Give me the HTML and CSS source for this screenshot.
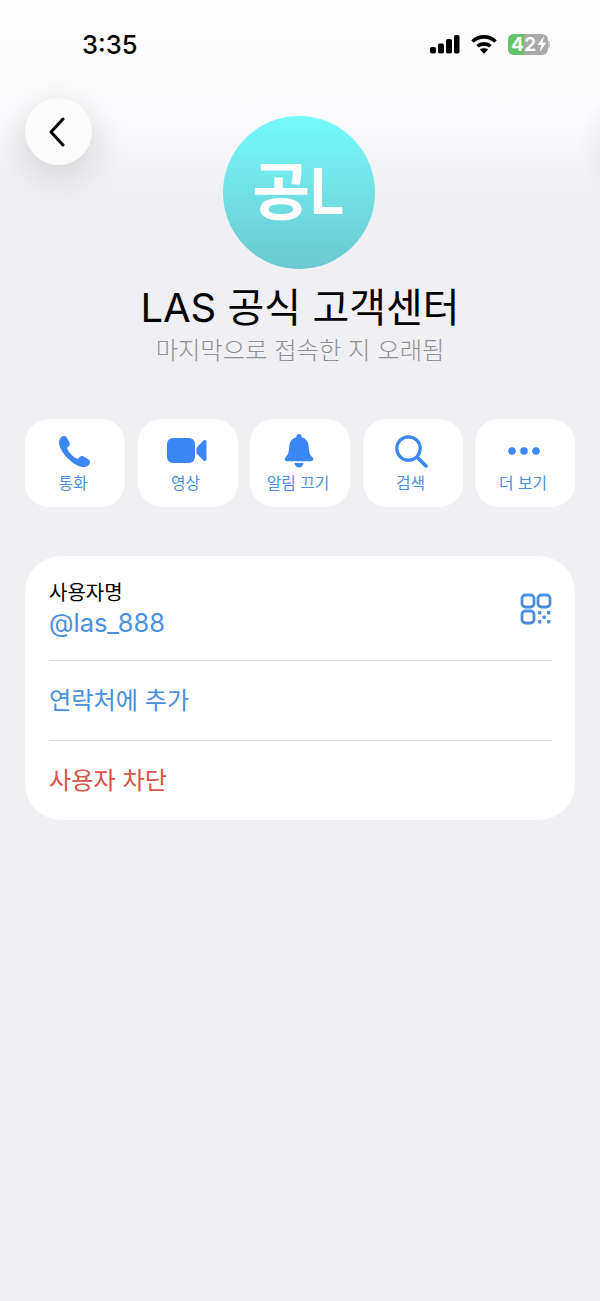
FILE: index.html
```html
<!DOCTYPE html>
<html lang="ko">
    <head>
        <meta charset="utf-8">
        <meta name="viewport" content="width=device-width, initial-scale=1">
        <title>LAS 공식 고객센터</title>
        <link rel="stylesheet" href="styles.css">
    </head>
    <body>
        <div class="status-bar">
            <span class="time">3:35</span>
            <div class="status-icons">
                <svg width="31" height="20" viewBox="0 0 31 20">
                    <rect x="1" y="13" width="6" height="6.500" rx="1.800" fill="#000"/>
                    <rect x="9" y="9.500" width="6" height="10" rx="1.800" fill="#000"/>
                    <rect x="17" y="5" width="6" height="14.500" rx="1.800" fill="#000"/>
                    <rect x="25" y="1" width="5.500" height="18.500" rx="1.800" fill="#000"/>
                </svg>
                <svg width="26" height="20" viewBox="0 0 26 20" fill="none" stroke="#000" stroke-width="3.600">
                    <path d="M1.500 7.500C7.800 1.300 18.200 1.300 24.500 7.500"/>
                    <path d="M6.500 12.300C10 9 16 9 19.500 12.300"/>
                    <path d="M13 19.800L8.800 15.600C11 13.700 15 13.700 17.200 15.600Z" fill="#000" stroke="none"/>
                </svg>
                <div class="battery">
                    <div class="battery-body">
                        <span class="battery-fill"></span>
                        <span class="battery-text">42</span>
                        <svg class="bolt" width="10" height="16" viewBox="0 0 10 16"><path d="M7 0L0.500 9H4.200L2.800 16L9.500 6.500H5.500Z" fill="#fff"/></svg>
                    </div>
                    <span class="battery-cap"></span>
                </div>
            </div>
        </div>

        <button class="back-btn">
            <svg width="16" height="30" viewBox="0 0 16 30" fill="none" stroke="#000" stroke-width="3" stroke-linecap="round" stroke-linejoin="round"><path d="M14 2L2 15L14 28"/></svg>
        </button>

        <div class="profile">
            <div class="avatar">공L</div>
            <h1 class="name">LAS 공식 고객센터</h1>
            <p class="last-seen">마지막으로 접속한 지 오래됨</p>
        </div>

        <div class="actions">
            <div class="action">
                <div class="action-icon">
                    <svg width="33" height="33" viewBox="0 0 34 34"><path d="M3.500 1.800C5 .6 7.600 .5 8.700 2.300L11.700 7.500C12.600 9 12.300 10.500 11.100 11.700L9.300 13.400C10.700 17.800 15.800 23.200 20.400 24.700L22.300 22.700C23.500 21.500 25 21.300 26.400 22.100L31.500 25.200C33.400 26.400 33.400 28.700 32.100 30.300C29.900 32.900 26.900 33.700 23.600 32.800C14.600 30.300 4.200 19.800 1.500 10.800C.5 7.200 1.200 4 3.500 1.800Z" fill="#3b87f5"/></svg>
                </div>
                <span class="action-label">통화</span>
            </div>
            <div class="action">
                <div class="action-icon">
                    <svg width="40" height="26" viewBox="0 0 40 26"><rect x="0" y="0" width="28" height="25" rx="6" fill="#3b87f5"/><path d="M29.500 10.500C29.500 9.800 29.800 9.200 30.300 8.800L36.500 2.500C37.600 1.500 39.500 2 39.500 3.800V21.200C39.500 23 37.600 23.500 36.500 22.500L30.300 16.200C29.800 15.800 29.500 15.200 29.500 14.500Z" fill="#3b87f5"/></svg>
                </div>
                <span class="action-label">영상</span>
            </div>
            <div class="action">
                <div class="action-icon">
                    <svg width="30" height="34" viewBox="0 0 30 34"><path d="M15 0C16.500 0 17.500 1 17.500 2.400V3.200C22.500 4.300 24.600 8.500 24.800 13C25 18.500 26 21 28.500 23.500C30 25 29.300 27.200 27 27.200H3C.7 27.200 0 25 1.500 23.500C4 21 5 18.500 5.200 13C5.400 8.500 7.500 4.300 12.500 3.200V2.400C12.500 1 13.500 0 15 0Z" fill="#3b87f5"/><path d="M10.500 29H19.500C19.200 31.700 17.400 33.500 15 33.500C12.600 33.500 10.800 31.700 10.500 29Z" fill="#3b87f5"/></svg>
                </div>
                <span class="action-label">알림 끄기</span>
            </div>
            <div class="action">
                <div class="action-icon">
                    <svg width="33" height="33" viewBox="0 0 33 33" fill="none" stroke="#3b87f5" stroke-width="3.200" stroke-linecap="round"><circle cx="13.500" cy="13.500" r="11.700"/><path d="M22.500 22.500L31 31" stroke-width="3.800"/></svg>
                </div>
                <span class="action-label">검색</span>
            </div>
            <div class="action">
                <div class="action-icon">
                    <svg width="34" height="10" viewBox="0 0 34 10"><circle cx="5" cy="5" r="3.800" fill="#3b87f5"/><circle cx="17" cy="5" r="3.800" fill="#3b87f5"/><circle cx="29" cy="5" r="3.800" fill="#3b87f5"/></svg>
                </div>
                <span class="action-label">더 보기</span>
            </div>
        </div>

        <div class="info-card">
            <div class="row row-user">
                <div>
                    <div class="row-label">사용자명</div>
                    <div class="row-username">@las_888</div>
                </div>
                <svg width="32" height="32" viewBox="0 0 32 32" fill="none" stroke="#4a8fe0" stroke-width="2.800">
                    <rect x="2" y="2" width="12" height="12" rx="3.500"/>
                    <rect x="18" y="2" width="12" height="12" rx="3.500"/>
                    <rect x="2" y="18" width="12" height="12" rx="3.500"/>
                    <g fill="#4a8fe0" stroke="none">
                        <rect x="18" y="18" width="3.400" height="3.400" rx=".8"/>
                        <rect x="27" y="18" width="3.400" height="3.400" rx=".8"/>
                        <rect x="22.500" y="22.500" width="3.400" height="3.400" rx=".8"/>
                        <rect x="18" y="27" width="3.400" height="3.400" rx=".8"/>
                        <rect x="27" y="27" width="3.400" height="3.400" rx=".8"/>
                    </g>
                </svg>
            </div>
            <div class="row"><span class="row-link">연락처에 추가</span></div>
            <div class="row"><span class="row-danger">사용자 차단</span></div>
        </div>
    </body>
</html>
```

FILE: styles.css
```css
*, ::after, ::before {
    box-sizing: border-box;
}
html {
    height: 100%;
}
body {
    position: relative;
    min-height: 100%;
    margin: 0;
    font-family: "Inter", "Noto Sans CJK KR", sans-serif;
    /* first layer is the shadow of a control cut off by the right screen edge */
    background:
        radial-gradient(circle at 640px 145px, rgba(0, 0, 0, 0.09), rgba(0, 0, 0, 0) 62px),
        linear-gradient(#fdfdfe 0px, #fbfbfd 115px, #f2f2f6 175px, #efeff4 205px) no-repeat #efeff4;
    overflow: hidden;
}
.status-bar {
    display: flex;
    justify-content: space-between;
    align-items: center;
    height: 90px;
    padding: 0 50px 2px 82px;
}
.time {
    font-size: 25.500px;
    font-weight: 500;
    color: #000;
}
.status-icons {
    display: flex;
    align-items: center;
    gap: 11px;
}
.battery {
    display: flex;
    align-items: center;
}
.battery-body {
    position: relative;
    display: flex;
    align-items: center;
    width: 40px;
    height: 21px;
    padding-left: 3px;
    border-radius: 6px;
    background: #a9a9ab;
    overflow: hidden;
}
.battery-fill {
    position: absolute;
    left: 0;
    top: 0;
    bottom: 0;
    width: 16px;
    background: #66c467;
}
.battery-text {
    position: relative;
    font-size: 19px;
    font-weight: 700;
    letter-spacing: 0.500px;
    color: #fff;
}
.bolt {
    position: relative;
}
.battery-cap {
    width: 2px;
    height: 7px;
    border-radius: 0 2px 2px 0;
    background: #c4c4c6;
}
.back-btn {
    position: absolute;
    left: 25px;
    top: 98px;
    display: flex;
    align-items: center;
    justify-content: center;
    width: 67px;
    height: 67px;
    padding: 0 4px 0 0;
    border: 0;
    border-radius: 50%;
    background: #fbfbfc;
    box-shadow: 0 10px 40px rgba(0, 0, 0, 0.17);
}
.profile {
    display: flex;
    flex-direction: column;
    align-items: center;
    padding-top: 26px;
}
.avatar {
    display: flex;
    align-items: center;
    justify-content: center;
    width: 152px;
    height: 153px;
    margin-right: 2px;
    padding: 0 2px 12px 0;
    border-radius: 50%;
    background: linear-gradient(#76fafc, #6bc8d0);
    color: #fff;
    font-size: 63px;
    font-weight: 600;
    letter-spacing: -1px;
}
.name {
    margin: 13px 0 0 0;
    font-size: 40px;
    font-weight: 400;
    line-height: 52px;
    color: #000;
}
.last-seen {
    margin: 2px 0 0 0;
    font-size: 24.300px;
    font-weight: 300;
    line-height: 28px;
    color: #8f8f95;
}
.actions {
    display: flex;
    justify-content: space-between;
    margin: 55px 25px 0 25px;
}
.action {
    display: flex;
    flex-direction: column;
    align-items: center;
    width: 100px;
    height: 88px;
    padding: 15px 4px 0 0;
    border-radius: 24px;
    background: #fff;
}
.action-icon {
    display: flex;
    align-items: center;
    justify-content: center;
    height: 34px;
    margin-left: 2px;
}
.action-label {
    margin-top: 5px;
    font-size: 15.800px;
    line-height: 22px;
    color: #4a8fe0;
}
.info-card {
    margin: 49px 25px 0 25px;
    padding: 0 23px 0 24px;
    border-radius: 36px;
    background: #fff;
}
.row {
    display: flex;
    align-items: center;
    justify-content: space-between;
    height: 80px;
    border-top: 1px solid #dedee2;
}
.row-user {
    height: 104px;
    padding-top: 2px;
    border-top: 0;
}
.row-label {
    font-size: 20px;
    line-height: 30px;
    color: #000;
}
.row-username {
    margin-top: -2px;
    font-size: 25.400px;
    line-height: 34px;
    color: #4a8fe0;
}
.row-link {
    font-size: 24.200px;
    line-height: 34px;
    color: #4a8fe0;
}
.row-danger {
    font-size: 24.200px;
    line-height: 34px;
    color: #d9534a;
}
```
